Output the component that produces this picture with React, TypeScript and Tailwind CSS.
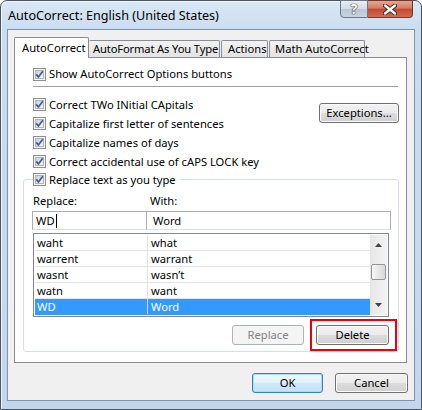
import React from 'react';

const ui = "font-['Noto_Sans',sans-serif] text-[11.2px] leading-[16px] text-black";

const btn =
	'flex items-center justify-center h-[20px] rounded-[3px] border border-[#707070] bg-[linear-gradient(#f2f2f2_0%,#ebebeb_50%,#dddddd_50%,#cfcfcf_100%)] shadow-[inset_0_0_0_1px_#fbfbfb]';

function Check() {
	return (
		<svg width="13" height="13" viewBox="0 0 13 13" className="shrink-0">
			<defs>
				<linearGradient id="cbg" x1="0" y1="0" x2="1" y2="1">
					<stop offset="0" stopColor="#cbcfd5" />
					<stop offset="1" stopColor="#f7f7f7" />
				</linearGradient>
			</defs>
			<rect x="0.5" y="0.5" width="12" height="12" fill="#f5f5f5" stroke="#8e8f8f" />
			<rect x="2.5" y="2.5" width="8" height="8" fill="url(#cbg)" stroke="#b0b5bb" />
			<path d="M3.2 6.4 L5.4 9 L9.8 3.3" fill="none" stroke="#3f5a96" strokeWidth="1.7" />
		</svg>
	);
}

function CheckRow({ label, h = 'h-[19px]' }: { label: string; h?: string }) {
	return (
		<div className={`flex items-center gap-[3px] ${h}`}>
			<Check />
			<span className="whitespace-nowrap">{label}</span>
		</div>
	);
}

const rows = [
	{ from: 'waht', to: 'what' },
	{ from: 'warrent', to: 'warrant' },
	{ from: 'wasnt', to: 'wasn\u2019t' },
	{ from: 'watn', to: 'want' },
	{ from: 'WD', to: 'Word', selected: true },
];

export default function App() {
	return (
		<div className={`${ui} w-[422px] h-[410px] overflow-hidden`}>
			<div className="h-[410px] w-[422px] rounded-t-[7px] border border-[#4b5563] bg-[linear-gradient(#dae7f5_0%,#c9dcf0_8%,#c2d7ee_100%)] shadow-[inset_1px_1px_0_#eef5fc]">
				{/* title bar */}
				<div className="flex items-start h-[28px]">
					<div className="pl-[7px] pt-[6px] text-[12.6px] leading-[18px] whitespace-nowrap">AutoCorrect: English (United States)</div>
					<div className="ml-auto mr-[8px] flex h-[18px] -mt-px">
						<div className="w-[28px] h-[18px] rounded-bl-[4px] border border-[#6b7686] bg-[linear-gradient(#e9eef4_0%,#d3dbe5_50%,#bcc7d5_50%,#c9d4e2_100%)] flex items-center justify-center text-[14px] font-bold text-white [text-shadow:0_0_1px_#333,0_0_1px_#333,0_0_1px_#333]">
							?
						</div>
						<div className="w-[45px] h-[18px] rounded-br-[4px] border border-l-0 border-[#6b3a35] bg-[linear-gradient(#e6a593_0%,#d47a66_45%,#c24a34_50%,#d16a4e_100%)] flex items-center justify-center">
							<svg width="14" height="11" viewBox="0 0 14 11">
								<path d="M2 1.5 L12 9.5 M12 1.5 L2 9.5" stroke="#3c1e1a" strokeWidth="4.2" strokeLinecap="round" />
								<path d="M2 1.5 L12 9.5 M12 1.5 L2 9.5" stroke="#ffffff" strokeWidth="2.4" strokeLinecap="round" />
							</svg>
						</div>
					</div>
				</div>

				{/* client area */}
				<div className="ml-[6px] w-[408px] h-[372px] border border-[#7f93ad] bg-[#f0f0f0]">
					<div className="pt-[7px] pl-[6px]">
						{/* tabs */}
						<div className="flex items-end h-[20px]">
							<div className="relative z-10 -mb-px h-[21px] w-[75px] rounded-t-[2px] border border-b-0 border-[#898c95] bg-white pl-[7px] pt-[2px]">
								AutoCorrect
							</div>
							<div className="h-[17px] w-[131px] rounded-t-[2px] border border-b-0 border-l-0 border-[#898c95] bg-[linear-gradient(#f2f2f2,#e3e3e3)] pl-[4px] leading-[16px] whitespace-nowrap tracking-[-0.15px]">
								AutoFormat As You Type
							</div>
							<div className="ml-px h-[17px] w-[47px] rounded-t-[2px] border border-b-0 border-[#898c95] bg-[linear-gradient(#f2f2f2,#e3e3e3)] pl-[6px] leading-[16px]">
								Actions
							</div>
							<div className="ml-px h-[17px] w-[96px] rounded-t-[2px] border border-b-0 border-[#898c95] bg-[linear-gradient(#f2f2f2,#e3e3e3)] pl-[5px] leading-[16px] whitespace-nowrap">
								Math AutoCorrect
							</div>
						</div>

						{/* panel */}
						<div className="w-[393px] h-[306px] border border-[#898c95] bg-white">
							<div className="pt-[8px] pl-[18px]">
								<CheckRow label="Show AutoCorrect Options buttons" h="h-[16px]" />
							</div>
							<div className="mt-[4px] ml-[18px] w-[365px] h-px bg-[#a0a0a0]" />

							<div className="mt-[8px] flex justify-between">
								<div className="pl-[18px]">
									<CheckRow label="Correct TWo INitial CApitals" />
									<CheckRow label="Capitalize first letter of sentences" />
									<CheckRow label="Capitalize names of days" />
									<CheckRow label="Correct accidental use of cAPS LOCK key" />
								</div>
								<div className={`${btn} mt-[8px] mr-[7px] w-[80px]`}>Exceptions...</div>
							</div>

							{/* replace group */}
							<div className="mt-[8px] ml-[8px] w-[376px] rounded-[3px] border border-[#d5dfe5]">
								<div className="-mt-[10px] ml-[9px] w-fit bg-white pr-[4px]">
									<CheckRow label="Replace text as you type" />
								</div>
								<div className="mt-[4px] flex h-[16px] pl-[9px]">
									<span className="w-[117px]">Replace:</span>
									<span>With:</span>
								</div>
								<div className="mt-[2px] ml-[8px] flex h-[19px]">
									<div className="w-[115px] border border-[#abadb3] border-b-[#dbdfe6] pl-[3px] flex items-center">
										WD<span className="ml-px inline-block w-px h-[14px] bg-black" />
									</div>
									<div className="w-[244px] border border-l-0 border-[#abadb3] border-b-[#dbdfe6] pl-[6px] flex items-center">Word</div>
								</div>

								{/* list */}
								<div className="mt-[3px] ml-[9px] w-[356px] h-[84px] border border-[#828790] flex p-px">
									<div className="flex-1">
										{rows.map(r => (
											<div
												key={r.from}
												className={`flex h-[16px] border-b ${r.selected ? 'bg-[#3399ff] text-white border-[#3399ff]' : 'border-[#e3e3e3]'}`}
											>
												<div className={`w-[113px] pl-[2px] leading-[15px] border-r ${r.selected ? 'border-[#cfe5ff]' : 'border-[#e3e3e3]'}`}>{r.from}</div>
												<div className="pl-[3px] leading-[15px]">{r.to}</div>
											</div>
										))}
									</div>
									<div className="w-[17px] h-full bg-[linear-gradient(90deg,#e6e6e6,#f3f3f3)] flex flex-col items-center">
										<svg width="9" height="17" viewBox="0 0 9 17" className="mt-[2px]">
											<path d="M1 10 L4.5 6 L8 10 Z" fill="#444" />
										</svg>
										<div className="mt-[10px] w-[15px] h-[16px] rounded-[2px] border border-[#959595] bg-[linear-gradient(90deg,#f6f6f6,#dadada)]" />
										<svg width="9" height="17" viewBox="0 0 9 17" className="mt-auto mb-[2px]">
											<path d="M1 7 L8 7 L4.5 11 Z" fill="#444" />
										</svg>
									</div>
								</div>

								{/* buttons */}
								<div className="mt-[2px] flex justify-end pr-px">
									<div className="mt-[6px] w-[72px] h-[20px] rounded-[3px] border border-[#adb2b5] bg-[#f4f4f4] text-[#838383] flex items-center justify-center">
										Replace
									</div>
									<div className="ml-[6px] border-2 border-[#e8000b] pt-[4px] pb-[4px] pl-[4px] pr-[6px]">
										<div className={`${btn} w-[73px]`}>Delete</div>
									</div>
								</div>
							</div>
						</div>

						{/* dialog buttons */}
						<div className="mt-[10px] flex justify-end pr-[6px]">
							<div className="w-[71px] h-[20px] rounded-[3px] border border-[#3c7fb1] bg-[linear-gradient(#f0f8fd_0%,#e2f2fb_50%,#cfe9f8_50%,#c2e2f5_100%)] shadow-[inset_0_0_0_1px_#a6dcf9] flex items-center justify-center">
								OK
							</div>
							<div className={`${btn} ml-[12px] w-[73px]`}>Cancel</div>
						</div>
					</div>
				</div>
			</div>
		</div>
	);
}
